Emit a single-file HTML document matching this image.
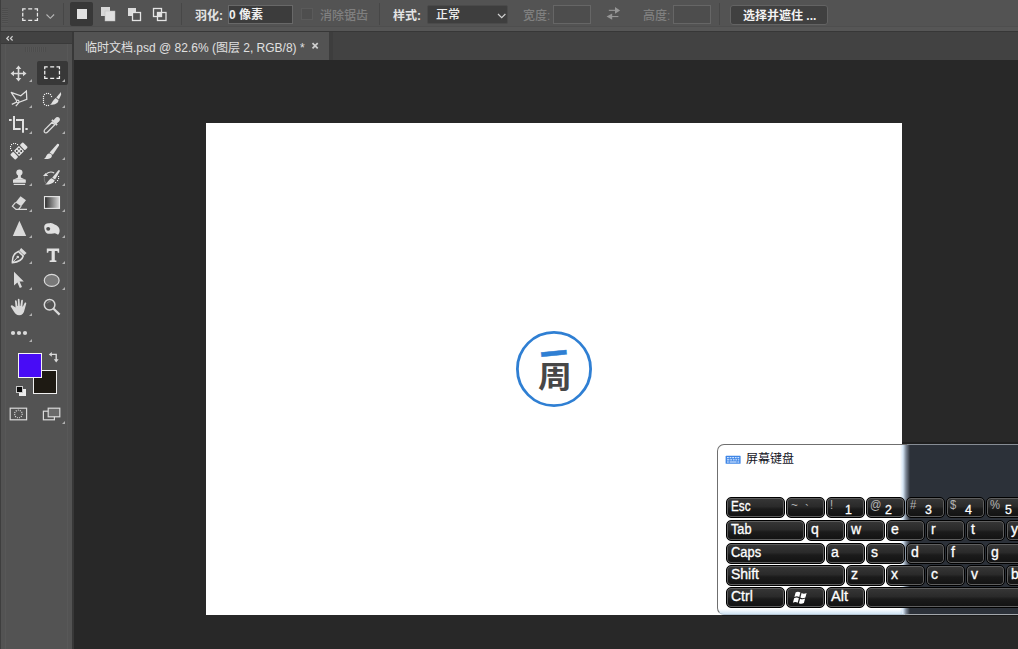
<!DOCTYPE html>
<html lang="zh-CN">
<head>
<meta charset="utf-8">
<title>临时文档.psd</title>
<style>
html,body{margin:0;padding:0;}
body{width:1018px;height:649px;overflow:hidden;background:#282828;position:relative;
  font-family:"Liberation Sans","Noto Sans CJK SC",sans-serif;font-size:12px;color:#e0e0e0;}
.abs{position:absolute;}
/* ---------- options bar ---------- */
#opt{left:0;top:0;width:1018px;height:32px;background:#535353;}
#opt .hl{left:0;top:26px;width:1018px;height:1px;background:#4e4e4e;}
#opt .bt{left:0;top:27px;width:1018px;height:4px;background:#565656;border-bottom:1px solid #373737;}
.vdiv{width:1px;background:#474747;top:3px;height:22px;}
.lbl{top:7px;height:18px;line-height:18px;font-size:12px;font-weight:700;color:#e4e4e4;white-space:nowrap;}
.lbl.dis{color:#808080;font-weight:500;}
.inp{top:5px;height:17px;border:1px solid #686868;background:#3c3c3c;box-sizing:content-box;}
.inp.dis{background:#4d4d4d;border-color:#666;}
/* ---------- toolbar ---------- */
#tb{left:0;top:32px;width:72px;height:617px;background:#535353;}
#tbh{left:0;top:0;width:72px;height:11px;background:#424242;border-bottom:1px solid #3a3a3a;}
#tbl{left:0;top:0;width:1px;height:617px;background:#3e3e3e;}
.ico{position:absolute;overflow:visible;}
.tri{position:absolute;width:0;height:0;border-left:3px solid transparent;border-bottom:3px solid #b0b0b0;}
/* ---------- tabs ---------- */
#tabbar{left:72px;top:32px;width:946px;height:28px;background:#424242;}
#gap{left:72px;top:32px;width:2px;height:617px;background:#383838;}
#tab{left:74px;top:32px;width:255px;height:28px;background:#535353;}
#tab span{position:absolute;left:11px;top:6.5px;line-height:18px;font-size:12px;color:#e0e0e0;white-space:nowrap;}
/* ---------- document ---------- */
#doc{left:206px;top:123px;width:696px;height:492px;background:#fff;}
/* ---------- keyboard ---------- */
#kb{left:717px;top:444px;width:310px;height:171px;border:1px solid #6f6f6f;border-radius:7px 0 0 7px;box-sizing:border-box;overflow:hidden;
  border-bottom-color:#b4c4d2;
  background:linear-gradient(180deg,rgba(150,195,228,0) 0,rgba(150,195,228,0) 164px,rgba(150,195,228,.55) 170px) 0 0/184px 100% no-repeat,linear-gradient(90deg,#ffffff 0,#ffffff 182px,#d6e6f5 185px,#7c8796 188px,#2c3139 192px,#2c3139 100%);}
.key{position:absolute;height:21px;box-sizing:border-box;border:1px solid #000;border-radius:5px;
  background:linear-gradient(180deg,#373737 0,#2a2a2a 45%,#1b1b1b 58%,#121212 100%);
  box-shadow:inset 0 0 0 1px #5e5e5e;color:#fff;font-size:13.5px;line-height:16px;}
.key b{position:absolute;left:4px;top:0px;font-weight:400;font-size:14px;transform-origin:0 50%;white-space:nowrap;-webkit-text-stroke:0.3px #fff;}
.key i{position:absolute;left:3px;top:-1px;font-style:normal;color:#b4b4b4;font-size:12.5px;transform:scaleX(0.9);transform-origin:0 50%;}
.key u{position:absolute;left:18px;top:3.5px;text-decoration:none;font-size:13px;transform:scaleX(0.95);transform-origin:0 50%;-webkit-text-stroke:0.3px #fff;}
</style>
</head>
<body>

<!-- ================= OPTIONS BAR ================= -->
<div id="opt" class="abs">
  <div class="abs hl"></div><div class="abs bt"></div>
  <!-- grip -->
  <div class="abs" style="left:0;top:0;width:1px;height:31px;background:#3e3e3e"></div>
  <div class="abs" style="left:2px;top:8px;width:6px;height:16px;background:repeating-linear-gradient(180deg,#4c4c4c 0,#4c4c4c 1px,#575757 1px,#575757 2px)"></div>
  <!-- current tool: marquee + chevron -->
  <svg class="ico" style="left:22px;top:8px" width="18" height="14" viewBox="0 0 18 14">
    <path d="M0.75 3.2 V0.75 H3.7 M6.2 0.75 H10.2 M12.5 0.75 H15.45 V3.2 M15.45 4.7 V8.4 M15.45 9.9 V12.25 H12.5 M10.2 12.25 H6.2 M3.7 12.25 H0.75 V9.9 M0.75 8.4 V4.7" fill="none" stroke="#ececec" stroke-width="1.25"/>
  </svg>
  <svg class="ico" style="left:44.5px;top:12.5px" width="12" height="8" viewBox="0 0 12 8">
    <path d="M1.5 1.5 L5.3 5.3 L9.1 1.5" fill="none" stroke="#b8b8b8" stroke-width="1.1"/>
  </svg>
  <div class="abs vdiv" style="left:63px"></div>
  <!-- selection mode buttons -->
  <div class="abs" style="left:70px;top:2px;width:23px;height:24px;background:#383838;border-radius:2px"></div>
  <div class="abs" style="left:77px;top:9px;width:10px;height:10px;background:#e2e2e2"></div>
  <svg class="ico" style="left:100px;top:6px" width="16" height="16" viewBox="0 0 16 16">
    <rect x="1" y="1" width="9" height="9" fill="#d8d8d8"/><rect x="5" y="5" width="10" height="10" fill="#e0e0e0" stroke="#bdbdbd" stroke-width="0.5"/>
  </svg>
  <svg class="ico" style="left:127px;top:6px" width="16" height="16" viewBox="0 0 16 16">
    <rect x="1" y="2" width="8" height="8" fill="#dcdcdc"/><rect x="5.5" y="6.5" width="8" height="8" fill="#535353" stroke="#e4e4e4" stroke-width="1.3"/>
  </svg>
  <svg class="ico" style="left:152px;top:6px" width="16" height="16" viewBox="0 0 16 16">
    <rect x="1.5" y="2.5" width="8" height="8" fill="none" stroke="#e4e4e4" stroke-width="1.3"/><rect x="5.5" y="6.5" width="8.5" height="8" fill="none" stroke="#e4e4e4" stroke-width="1.3"/><rect x="6" y="7" width="3.5" height="3.5" fill="#e0e0e0"/>
  </svg>
  <div class="abs vdiv" style="left:181px"></div>
  <div class="abs lbl" style="left:195px">羽化:</div>
  <div class="abs inp" style="left:228px;width:63px"><span class="abs lbl" style="left:0px;top:1px;height:17px;line-height:17px;color:#f0f0f0">0 像素</span></div>
  <div class="abs" style="left:301px;top:8px;width:10px;height:10px;border:1px solid #5a5a5a;background:#4e4e4e"></div>
  <div class="abs lbl dis" style="left:320px">消除锯齿</div>
  <div class="abs vdiv" style="left:379px"></div>
  <div class="abs lbl" style="left:393px">样式:</div>
  <div class="abs inp" style="left:427px;width:79px;border-color:#4a4a4a;background:#3e3e3e;border-radius:2px"><span class="abs lbl" style="left:8px;top:1px;height:17px;line-height:17px;color:#f0f0f0;font-weight:500">正常</span>
    <svg class="ico" style="left:69px;top:7px" width="10" height="7" viewBox="0 0 10 7"><path d="M1 1 L4.7 4.7 L8.4 1" fill="none" stroke="#d0d0d0" stroke-width="1.2"/></svg>
  </div>
  <div class="abs lbl dis" style="left:523px">宽度:</div>
  <div class="abs inp dis" style="left:553px;width:36px"></div>
  <svg class="ico" style="left:606px;top:7px" width="15" height="13" viewBox="0 0 15 13" fill="#969696">
    <rect x="2.8" y="2.8" width="6.4" height="1.1"/><path d="M9 0.1 L14.1 3.4 L9 6.8 Z"/>
    <rect x="6" y="9" width="6.4" height="1.1"/><path d="M6.2 6.4 L0.6 9.6 L6.2 12.8 Z"/>
  </svg>
  <div class="abs lbl dis" style="left:643px">高度:</div>
  <div class="abs inp dis" style="left:673px;width:36px"></div>
  <div class="abs vdiv" style="left:719px"></div>
  <div class="abs" style="left:730px;top:5px;width:96px;height:18px;border:1px solid #636363;background:#404040;border-radius:3px;box-sizing:content-box"><span class="abs lbl" style="left:12px;top:1px;color:#f2f2f2;font-weight:700">选择并遮住 ...</span></div>
</div>

<!-- ================= TAB BAR ================= -->
<div id="tabbar" class="abs"></div>
<div id="tab" class="abs"><span>临时文档.psd @ 82.6% (图层 2, RGB/8) *</span>
  <svg class="ico" style="left:237px;top:10px" width="9" height="9" viewBox="0 0 9 9"><path d="M1.5 1.1 L6.7 6.3 M6.7 1.1 L1.5 6.3" stroke="#cfcfcf" stroke-width="1.7" fill="none"/></svg>
</div>
<div class="abs" style="left:329px;top:32px;width:4px;height:28px;background:#3d3d3d"></div>

<!-- ================= DOCUMENT ================= -->
<div id="doc" class="abs">
  <svg class="ico" style="left:304px;top:203px" width="88" height="88" viewBox="0 0 88 88">
    <circle cx="44" cy="43" r="36.6" fill="none" stroke="#2f7fd3" stroke-width="2.8"/>
    <g transform="rotate(-6 44 30)"><text x="44" y="38" stroke="#2f7fd3" stroke-width="0.5" text-anchor="middle" font-family="'Noto Sans CJK SC','Liberation Sans',sans-serif" font-weight="900" font-size="27" fill="#2f7fd3">一</text></g>
    <g transform="translate(45 0) scale(1.13 1) translate(-45 0)"><text x="45" y="61" text-anchor="middle" font-family="'Noto Sans CJK SC','Liberation Sans',sans-serif" font-weight="700" font-size="30" fill="#474747">周</text></g>
  </svg>
</div>

<!-- ================= TOOLBAR ================= -->
<div id="tb" class="abs">
  <div id="tbh" class="abs">
    <svg class="ico" style="left:6px;top:3.5px" width="8" height="5" viewBox="0 0 8 5"><path d="M2.9 0.3 L0.8 2.4 L2.9 4.5 M6.6 0.3 L4.5 2.4 L6.6 4.5" fill="none" stroke="#cfcfcf" stroke-width="1.25"/></svg>
  </div>
  <div id="tbl" class="abs"></div>
  <div class="abs" style="left:5px;top:12px;width:1px;height:605px;background:#585858"></div>
  <div class="abs" style="left:67px;top:12px;width:1px;height:605px;background:#585858"></div>
  <!-- grip -->
  <div class="abs" style="left:25px;top:15px;width:21px;height:5px;background:repeating-linear-gradient(90deg,#4d4d4d 0,#4d4d4d 1px,#565656 1px,#565656 2px)"></div>
  <!-- selected tool bg -->
  <div class="abs" style="left:37px;top:29px;width:31px;height:24px;background:#383838;border-radius:2px"></div>

  <!-- row1 y=73 : move / marquee -->
  <svg class="ico" style="left:10px;top:33px" width="17" height="17" viewBox="0 0 17 17" fill="#dadada">
    <path d="M8.5 0.5 L11.3 4 H9.3 V7.7 H13 V5.7 L16.5 8.5 L13 11.3 V9.3 H9.3 V13 H11.3 L8.5 16.5 L5.7 13 H7.7 V9.3 H4 V11.3 L0.5 8.5 L4 5.7 V7.7 H7.7 V4 H5.7 Z"/>
  </svg><div class="tri" style="left:29px;top:47px"></div>
  <svg class="ico" style="left:44px;top:34px" width="17" height="14" viewBox="0 0 17 14">
    <path d="M0.75 3.2 V0.75 H3.7 M6.2 0.75 H10.2 M12.5 0.75 H15.45 V3.2 M15.45 4.7 V8.4 M15.45 9.9 V12.25 H12.5 M10.2 12.25 H6.2 M3.7 12.25 H0.75 V9.9 M0.75 8.4 V4.7" fill="none" stroke="#f2f2f2" stroke-width="1.25"/>
  </svg><div class="tri" style="left:62px;top:47px"></div>

  <!-- row2 y=99 : polygonal lasso / quick select -->
  <svg class="ico" style="left:10px;top:57px" width="18" height="18" viewBox="0 0 18 18" fill="none" stroke="#e0e0e0" stroke-width="1.25" stroke-linejoin="miter">
    <path d="M1 3.4 L10.8 6.8 L16.4 2 L16.8 10.4 L9.2 13.2 L5.8 17.2 M1 3.2 L6.6 11.6 M7.4 12.8 L1.8 15.4"/>
    <circle cx="7.7" cy="12.4" r="1.3" fill="#535353" stroke-width="1.1"/>
  </svg><div class="tri" style="left:29px;top:73px"></div>
  <svg class="ico" style="left:42px;top:59px" width="20" height="16" viewBox="0 0 20 16">
    <g fill="#f0f0f0"><rect x="1.9" y="2.9" width="1.2" height="1.2"/><rect x="3.9" y="1.9" width="1.2" height="1.2"/><rect x="5.9" y="1.9" width="1.2" height="1.2"/><rect x="7.9" y="2.9" width="1.2" height="1.2"/><rect x="8.9" y="4.9" width="1.2" height="1.2"/><rect x="0.9" y="4.9" width="1.2" height="1.2"/><rect x="0.9" y="6.9" width="1.2" height="1.2"/><rect x="0.9" y="8.9" width="1.2" height="1.2"/><rect x="0.9" y="10.9" width="1.2" height="1.2"/><rect x="1.9" y="12.9" width="1.2" height="1.2"/><rect x="3.9" y="13.9" width="1.2" height="1.2"/><rect x="5.9" y="13.9" width="1.2" height="1.2"/></g>
    <path d="M18.9 0.9 L19.1 3.8 L16.9 8.4 L14.3 6.4 Z" fill="#e0e0e0"/>
    <path d="M13.7 7 L16.5 9.2 C16.4 12.2 12.6 14 8 13.8 C10.2 12.4 10.8 9 13.7 7 Z" fill="#e0e0e0"/>
  </svg><div class="tri" style="left:62px;top:73px"></div>

  <!-- row3 y=125 : crop / eyedropper -->
  <svg class="ico" style="left:9px;top:83px" width="19" height="19" viewBox="0 0 19 19" fill="none" stroke="#e0e0e0" stroke-width="2">
    <path d="M5 1 V14 H11.7 M7 5 H14 V17.7 M0 5 H2.7 M16.4 14 H18.7"/>
  </svg><div class="tri" style="left:29px;top:99px"></div>
  <svg class="ico" style="left:43px;top:84px" width="18" height="18" viewBox="0 0 18 18">
    <path d="M9.2 6.2 L11.8 8.8 L4.6 16 C3.6 17 2.2 17 1.6 16.4 C1 15.8 1 14.4 2 13.4 Z" fill="none" stroke="#dadada" stroke-width="1.3"/>
    <path d="M8.3 4.6 L9.6 3.3 L10.6 4.3 L12.2 2.2 C13.4 0.8 15.3 0.7 16.3 1.7 C17.3 2.7 17.2 4.6 15.8 5.8 L13.7 7.4 L14.7 8.4 L13.4 9.7 Z" fill="#dadada"/>
  </svg><div class="tri" style="left:62px;top:99px"></div>

  <!-- row4 y=151 : healing / brush -->
  <svg class="ico" style="left:9px;top:108px" width="20" height="20" viewBox="0 0 20 20">
    <g transform="rotate(-45 10 11)" fill="#e2e2e2">
      <rect x="1.0999999999999996" y="7.4" width="4.3" height="7.2" rx="0.9"/>
      <rect x="14.6" y="7.4" width="4.3" height="7.2" rx="0.9"/>
      <rect x="6.5" y="7.3" width="7" height="7.4" rx="0.5"/>
      <g fill="#3c3c3c"><circle cx="8.44" cy="9.44" r="0.9"/><circle cx="11.56" cy="9.44" r="0.9"/><circle cx="8.44" cy="12.56" r="0.9"/><circle cx="11.56" cy="12.56" r="0.9"/></g>
    </g>
    <g fill="#f2f2f2"><rect x="2" y="4" width="1.1" height="1.1"/><rect x="4" y="3" width="1.1" height="1.1"/><rect x="6" y="3" width="1.1" height="1.1"/><rect x="8" y="4" width="1.1" height="1.1"/><rect x="1" y="6" width="1.1" height="1.1"/><rect x="1" y="8" width="1.1" height="1.1"/><rect x="2" y="10" width="1.1" height="1.1"/></g>
  </svg><div class="tri" style="left:29px;top:125px"></div>
  <svg class="ico" style="left:43px;top:111px" width="17" height="17" viewBox="0 0 17 17" fill="#e0e0e0">
    <path d="M0.8 16 C3.2 15.4 2.8 12 5.2 10.8 C7.4 9.8 9.4 11.4 8.8 13.4 C8.2 15.6 4.6 16.4 0.8 16 Z"/>
    <path d="M6.6 9.4 L14.2 0.9 C15.2 0.2 16.6 1.2 16 2.4 L9.8 11.8 Z"/>
  </svg><div class="tri" style="left:62px;top:125px"></div>

  <!-- row5 y=177 : stamp / history brush -->
  <svg class="ico" style="left:12px;top:137px" width="15" height="17" viewBox="0 0 15 17" fill="#e0e0e0">
    <circle cx="7.4" cy="3.5" r="3.1"/>
    <path d="M6.1 5.6 H8.7 L8.9 8.6 L13.6 10.8 H1.2 L5.9 8.6 Z"/>
    <rect x="1" y="10.6" width="12.8" height="3.2"/>
    <rect x="1.7" y="14.8" width="11.4" height="1.2"/>
  </svg><div class="tri" style="left:29px;top:151px"></div>
  <svg class="ico" style="left:42px;top:137px" width="20" height="17" viewBox="0 0 20 17">
    <path d="M16.6 0.9 L18.1 1.7 L13.1 10.6 L10.2 8.7 Z" fill="#e0e0e0"/>
    <path d="M9.7 9.3 L12.6 11.3 C12.2 14.2 8 15.9 3.2 15.5 C5.6 14 6.4 10.6 9.7 9.3 Z" fill="#e0e0e0"/>
    <path d="M1 6.9 L3.7 3.9 L6.2 7 Z" fill="#e0e0e0"/>
    <path d="M4.4 4.8 C6.6 3 10 2.7 12.2 3.9" fill="none" stroke="#e0e0e0" stroke-width="1.1"/>
    <path d="M2.7 7.2 C1.8 10 2.4 12.8 4 14.4" fill="none" stroke="#808080" stroke-width="0.9"/>
    <g fill="#f0f0f0"><rect x="16" y="7" width="1.1" height="1.1"/><rect x="16" y="9" width="1.1" height="1.1"/><rect x="15" y="11" width="1.1" height="1.1"/><rect x="13" y="13" width="1.1" height="1.1"/></g>
  </svg><div class="tri" style="left:62px;top:151px"></div>

  <!-- row6 y=203 : eraser / gradient -->
  <svg class="ico" style="left:11px;top:163px" width="17" height="16" viewBox="0 0 17 16">
    <path d="M9.5 1.2 L15 5.2 L10.2 11.2 L4.6 7.4 Z" fill="#dadada"/>
    <path d="M4.6 7.4 L1.4 11.2 L5 14.4 H16 M10.2 11.2 L7.4 14.4" fill="none" stroke="#dadada" stroke-width="1.2"/>
  </svg><div class="tri" style="left:29px;top:177px"></div>
  <svg class="ico" style="left:43px;top:163px" width="18" height="15" viewBox="0 0 18 15">
    <defs><linearGradient id="gr" x1="0" x2="1" y1="0" y2="0"><stop offset="0" stop-color="#2a2a2a"/><stop offset="1" stop-color="#d8d8d8"/></linearGradient></defs>
    <rect x="1.5" y="1.6" width="15" height="11.8" fill="url(#gr)" stroke="#e6e6e6" stroke-width="1.1"/>
  </svg><div class="tri" style="left:62px;top:177px"></div>

  <!-- row7 y=229 : sharpen / sponge -->
  <svg class="ico" style="left:12px;top:188px" width="15" height="17" viewBox="0 0 15 17"><path d="M7.4 0.8 L14.2 16 H0.8 Z" fill="#dadada"/></svg><div class="tri" style="left:29px;top:203px"></div>
  <svg class="ico" style="left:43px;top:190px" width="18" height="14" viewBox="0 0 18 14">
    <path d="M1.2 5 C1 2.4 3.6 0.8 6.6 1.2 C8.4 0.6 10.2 1.6 11.6 2.6 C14 3.4 16.4 5.2 16.6 8 C16.8 9.6 16.2 11.4 15.4 12.4 C14.2 12.6 13.6 11.6 12.4 11.4 C10.8 11.2 9.6 12 7.8 11.8 C6.2 11.6 5.4 12.2 3.8 11.2 C2.2 10.2 1.4 7.6 1.2 5 Z" fill="#e0e0e0"/>
    <ellipse cx="5.2" cy="6.8" rx="2" ry="1.9" fill="#4c4c4c"/>
  </svg><div class="tri" style="left:62px;top:203px"></div>

  <!-- row8 y=255 : pen / type -->
  <svg class="ico" style="left:11px;top:215px" width="17" height="17" viewBox="0 0 17 17">
    <path d="M10.2 1 L15.6 6 L13.2 8.2 L8.2 3.4 Z" fill="#dadada"/>
    <path d="M7.4 4.4 L12.2 9 C11.4 12.4 7.6 15 1.4 15.6 C1.2 10 3.6 5.8 7.4 4.4 Z" fill="none" stroke="#e0e0e0" stroke-width="1.6"/>
    <path d="M1.6 15.4 L6.4 10.4" stroke="#dadada" stroke-width="1"/><circle cx="6.8" cy="10" r="1.3" fill="#dadada"/>
  </svg><div class="tri" style="left:29px;top:229px"></div>
  <svg class="ico" style="left:46px;top:216px" width="15" height="15" viewBox="0 0 15 15" fill="#e0e0e0">
    <path d="M0.8 0.4 H13.2 V4.8 H11.8 L11.4 3 H8.8 V12.2 L10.4 12.6 V14 H3.6 V12.6 L5.6 12.2 V3 H2.6 L2.2 4.8 H0.8 Z"/>
  </svg><div class="tri" style="left:62px;top:229px"></div>

  <!-- row9 y=281 : path select / ellipse -->
  <svg class="ico" style="left:13px;top:239px" width="12" height="18" viewBox="0 0 12 18"><path d="M1 0.8 L10.8 10.4 H6.6 L9 16 L6.8 17 L4.4 11.4 L1 14.6 Z" fill="#dadada"/></svg><div class="tri" style="left:29px;top:255px"></div>
  <svg class="ico" style="left:43px;top:241px" width="18" height="15" viewBox="0 0 18 15"><ellipse cx="8.7" cy="7.4" rx="7.4" ry="6" fill="#797979" stroke="#dadada" stroke-width="1.2"/></svg><div class="tri" style="left:62px;top:255px"></div>

  <!-- row10 y=307 : hand / zoom -->
  <svg class="ico" style="left:10px;top:266px" width="18" height="18" viewBox="0 0 18 18" fill="#dadada">
    <path d="M5.6 9.6 L5 3.2 C4.9 2 6.5 1.8 6.7 3 L7.5 8 H8 L7.8 1.6 C7.8 0.4 9.5 0.4 9.5 1.6 L9.9 8 H10.4 L11.2 2.4 C11.4 1.2 13 1.5 12.9 2.7 L12.4 8.6 H12.9 L14.6 5 C15.1 4 16.6 4.6 16.2 5.8 L14.6 11.4 C14 15 12.2 17.2 9.2 17.2 C6.6 17.2 5.4 16 4 13.8 L0.9 8.8 C0.3 7.8 1.5 6.8 2.5 7.6 Z"/>
  </svg><div class="tri" style="left:29px;top:281px"></div>
  <svg class="ico" style="left:43px;top:266px" width="18" height="18" viewBox="0 0 18 18" fill="none" stroke="#dadada">
    <circle cx="6.6" cy="6.8" r="5.3" stroke-width="1.5"/><path d="M10.6 10.8 L16.6 16.6" stroke-width="2.2"/>
    <path d="M4 5.4 C4.6 4 6.2 3.4 7.6 3.8" stroke-width="0.8" stroke="#9a9a9a"/>
  </svg>

  <!-- dots -->
  <svg class="ico" style="left:10px;top:298px" width="18" height="6" viewBox="0 0 18 6" fill="#dadada"><circle cx="3" cy="3" r="2.1"/><circle cx="9" cy="3" r="2.1"/><circle cx="15" cy="3" r="2.1"/></svg><div class="tri" style="left:29px;top:307px"></div>

  <!-- swatches -->
  <div class="abs" style="left:33px;top:338px;width:22px;height:22px;border:1px solid #f0f0f0;background:#1e1a13"></div>
  <div class="abs" style="left:18px;top:321px;width:22px;height:23px;border:1px solid #f4f4f4;background:#480cf6"></div>
  <svg class="ico" style="left:48px;top:319px" width="12" height="12" viewBox="0 0 12 12" fill="#dadada" stroke="#dadada">
    <path d="M3 3.4 H8.2 V9" fill="none" stroke-width="1.4"/><path d="M0.8 3.4 L3.8 1 V5.8 Z" stroke="none"/><path d="M8.2 11.4 L5.8 8.2 H10.6 Z" stroke="none"/>
  </svg>
  <div class="abs" style="left:19px;top:357px;width:7px;height:7px;background:#ececec"></div>
  <div class="abs" style="left:16px;top:354px;width:5px;height:5px;border:1px solid #c8c8c8;background:#0a0a0a"></div>

  <!-- quick mask / screen mode -->
  <svg class="ico" style="left:9px;top:375px" width="19" height="14" viewBox="0 0 19 14" fill="none" stroke="#dadada">
    <rect x="1.2" y="1.2" width="16.4" height="11.6" stroke-width="1.2"/><circle cx="9.4" cy="7" r="3.8" stroke-width="1.2" stroke-dasharray="1 1.1"/>
  </svg>
  <svg class="ico" style="left:42px;top:375px" width="19" height="14" viewBox="0 0 19 14" stroke="#dadada" stroke-width="1.2">
    <rect x="1.4" y="4.2" width="11" height="8.6" fill="#535353"/><rect x="6.2" y="1.2" width="11.6" height="8.6" fill="#6a6a6a"/>
  </svg><div class="tri" style="left:62px;top:389px"></div>
</div>
<div id="gap" class="abs"></div>

<!-- ================= KEYBOARD ================= -->
<div class="abs" style="left:902px;top:442px;width:116px;height:2px;background:#1f1f1f"></div>
<div id="kb" class="abs">
<svg class="ico" style="left:7px;top:10px" width="16" height="10" viewBox="0 0 16 10">
  <rect x="0.6" y="0.8" width="15" height="8" rx="0.6" fill="#3f86e6"/>
  <g fill="#cfe3ff"><rect x="2" y="2" width="1.8" height="1.2"/><rect x="4.6" y="2" width="1.8" height="1.2"/><rect x="7.2" y="2" width="1.8" height="1.2"/><rect x="9.8" y="2" width="1.8" height="1.2"/><rect x="12.4" y="2" width="1.8" height="1.2"/>
  <rect x="2" y="4.2" width="2.4" height="1.2"/><rect x="5.2" y="4.2" width="1.8" height="1.2"/><rect x="7.8" y="4.2" width="1.8" height="1.2"/><rect x="10.4" y="4.2" width="1.8" height="1.2"/><rect x="13" y="4.2" width="1.2" height="1.2"/>
  <rect x="2" y="6.4" width="1.8" height="1.2"/><rect x="4.6" y="6.4" width="7" height="1.2"/><rect x="12.4" y="6.4" width="1.8" height="1.2"/></g>
</svg>
<span class="abs" style="left:28px;top:5px;line-height:18px;font-size:12px;color:#15151f;white-space:nowrap;text-shadow:0 0 4px #fff,0 0 6px #fff">屏幕键盘</span>
<div class="key" style="left:8px;top:52px;width:59px"><b style="transform:scaleX(0.835)">Esc</b></div>
<div class="key" style="left:68px;top:52px;width:39px"><i style="font-size:13px;top:-1px;left:4px">~</i><i style="left:18px;top:4px;font-size:13px">`</i></div>
<div class="key" style="left:108px;top:52px;width:39px"><i>!</i><u>1</u></div>
<div class="key" style="left:148px;top:52px;width:39px"><i>@</i><u>2</u></div>
<div class="key" style="left:188px;top:52px;width:39px"><i>#</i><u>3</u></div>
<div class="key" style="left:228px;top:52px;width:39px"><i>$</i><u>4</u></div>
<div class="key" style="left:268px;top:52px;width:39px"><i>%</i><u>5</u></div>
<div class="key" style="left:8px;top:75px;width:79px"><b style="transform:scaleX(0.91)">Tab</b></div>
<div class="key" style="left:88px;top:75px;width:39px"><b>q</b></div>
<div class="key" style="left:128px;top:75px;width:39px"><b>w</b></div>
<div class="key" style="left:168px;top:75px;width:39px"><b>e</b></div>
<div class="key" style="left:208px;top:75px;width:39px"><b>r</b></div>
<div class="key" style="left:248px;top:75px;width:39px"><b>t</b></div>
<div class="key" style="left:288px;top:75px;width:39px"><b>y</b></div>
<div class="key" style="left:8px;top:98px;width:99px"><b style="transform:scaleX(0.92)">Caps</b></div>
<div class="key" style="left:108px;top:98px;width:39px"><b>a</b></div>
<div class="key" style="left:148px;top:98px;width:39px"><b>s</b></div>
<div class="key" style="left:188px;top:98px;width:39px"><b>d</b></div>
<div class="key" style="left:228px;top:98px;width:39px"><b>f</b></div>
<div class="key" style="left:268px;top:98px;width:39px"><b>g</b></div>
<div class="key" style="left:8px;top:120px;width:119px"><b style="transform:scaleX(1.0)">Shift</b></div>
<div class="key" style="left:128px;top:120px;width:39px"><b>z</b></div>
<div class="key" style="left:168px;top:120px;width:39px"><b>x</b></div>
<div class="key" style="left:208px;top:120px;width:39px"><b>c</b></div>
<div class="key" style="left:248px;top:120px;width:39px"><b>v</b></div>
<div class="key" style="left:288px;top:120px;width:39px"><b>b</b></div>
<div class="key" style="left:8px;top:142px;width:59px"><b style="transform:scaleX(1.0)">Ctrl</b></div>
<div class="key" style="left:68px;top:142px;width:39px"><svg class="ico" style="left:5px;top:3px" width="18" height="14" viewBox="0 0 18 14" fill="#fff">
<path d="M3.6 1.4 C5.2 0.4 6.8 0.5 8.4 1.5 L7.2 6 C5.6 5.1 4.1 5 2.4 6 Z"/>
<path d="M9.6 2.1 C11.2 3 12.9 2.9 14.6 1.9 L13.4 6.4 C11.7 7.4 10 7.4 8.4 6.5 Z"/>
<path d="M2.1 7.2 C3.8 6.2 5.3 6.3 6.9 7.2 L5.7 11.7 C4.1 10.8 2.6 10.7 0.9 11.7 Z"/>
<path d="M8.1 7.7 C9.7 8.6 11.4 8.6 13.1 7.6 L11.9 12.1 C10.2 13.1 8.5 13.1 6.9 12.2 Z"/></svg></div>
<div class="key" style="left:108px;top:142px;width:39px"><b style="transform:scaleX(1.04)">Alt</b></div>
<div class="key" style="left:148px;top:142px;width:164px"></div>
</div>

<div class="abs" style="left:907px;top:444px;width:111px;height:1px;background:#878d95"></div>
<div class="abs" style="left:905px;top:614px;width:113px;height:1px;background:#a3a7ab"></div>
<div class="abs" style="left:722px;top:615px;width:296px;height:1px;background:#1c1c1c"></div>
</body>
</html>
